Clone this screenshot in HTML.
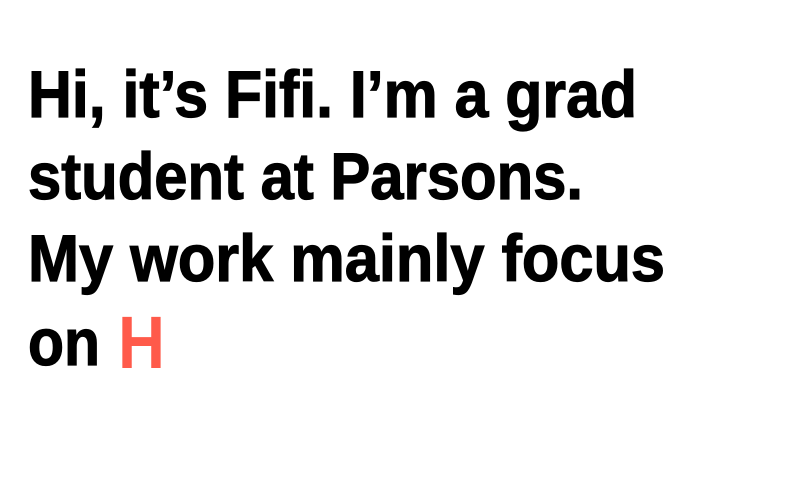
<!DOCTYPE html>
<html><head><meta charset="utf-8"><style>
html,body{margin:0;padding:0;background:#fff;width:800px;height:480px;overflow:hidden}
text{font-family:"Liberation Sans",sans-serif;font-weight:bold;fill:#000;font-size:66px;stroke:#000;stroke-width:1.2px}
</style></head><body>
<svg width="800" height="480" xmlns="http://www.w3.org/2000/svg">
<text x="28" y="117" textLength="609" lengthAdjust="spacingAndGlyphs">Hi, it’s Fifi. I’m a grad</text>
<text x="28" y="199" textLength="555" lengthAdjust="spacingAndGlyphs">student at Parsons.</text>
<text x="28" y="281" textLength="637" lengthAdjust="spacingAndGlyphs">My work mainly focus</text>
<text x="28" y="365" textLength="72" lengthAdjust="spacingAndGlyphs">on</text>
<text x="118" y="368" textLength="47" lengthAdjust="spacingAndGlyphs" style="fill:#ff5a4a;stroke:none;font-size:74px">H</text>
</svg>
</body></html>
